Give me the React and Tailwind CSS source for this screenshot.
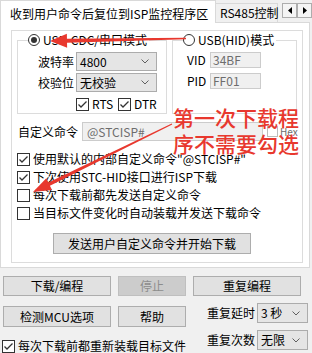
import React from "react";

function Radio({ on }) {
  return (
    <span className="flex items-center justify-center w-[12px] h-[12px] rounded-full border border-[#333333] bg-white">
      {on && <span className="w-[6px] h-[6px] rounded-full bg-[#333333]" />}
    </span>
  );
}

function Box({ on }) {
  return (
    <span className="flex items-center justify-center w-[13px] h-[13px] border border-[#333333] bg-white shrink-0">
      {on && (
        <svg width="11" height="11" viewBox="0 0 11 11">
          <polyline points="1.5,5.5 4,8 9.5,2.5" fill="none" stroke="#333333" strokeWidth="1.3" />
        </svg>
      )}
    </span>
  );
}

function Chevron() {
  return (
    <svg width="8" height="5" viewBox="0 0 8 5" className="shrink-0">
      <polyline points="0.5,0.5 4,4 7.5,0.5" fill="none" stroke="#606060" strokeWidth="1" />
    </svg>
  );
}

function Select({ value, className }) {
  return (
    <div className={`flex items-center justify-between pl-[3px] pr-[7px] bg-[#e5e5e5] border border-[#acacac] ${className}`}>
      <span className="whitespace-nowrap">{value}</span>
      <Chevron />
    </div>
  );
}

function Btn({ children, className = "", disabled }) {
  return (
    <div
      className={`flex items-center justify-center border whitespace-nowrap ${
        disabled ? "bg-[#cccccc] border-[#bfbfbf] text-[#8c8c8c]" : "bg-[#e1e1e1] border-[#adadad]"
      } ${className}`}
    >
      {children}
    </div>
  );
}

function TabArrow({ dir }) {
  return (
    <div className="flex items-center justify-center w-[15px] h-[15px] border border-[#adadad] bg-[#f4f4f4]">
      <svg width="4" height="7" viewBox="0 0 4 7">
        {dir === "l" ? <polygon points="4,0 0,3.5 4,7" fill="#000" /> : <polygon points="0,0 4,3.5 0,7" fill="#000" />}
      </svg>
    </div>
  );
}

// tapered annotation arrow: tip + tail, head size, shaft width at head / at tail
function arrowPoints(tip, tail, headLen, headHalf, w0, w1) {
  const dx = tail[0] - tip[0];
  const dy = tail[1] - tip[1];
  const len = Math.hypot(dx, dy);
  const ux = dx / len;
  const uy = dy / len;
  const px = -uy;
  const py = ux;
  const bx = tip[0] + ux * headLen;
  const by = tip[1] + uy * headLen;
  const pts = [
    [tip[0], tip[1]],
    [bx + px * headHalf, by + py * headHalf],
    [bx + (px * w0) / 2, by + (py * w0) / 2],
    [tail[0] + (px * w1) / 2, tail[1] + (py * w1) / 2],
    [tail[0] - (px * w1) / 2, tail[1] - (py * w1) / 2],
    [bx - (px * w0) / 2, by - (py * w0) / 2],
    [bx - px * headHalf, by - py * headHalf],
  ];
  return pts.map((p) => p.join(",")).join(" ");
}

const RED = "#e8382e";

export default function App() {
  return (
    <div className="relative w-[312px] h-[353px] overflow-hidden bg-[#f0f0f0] text-[12px] leading-[14px] text-black font-['Noto_Sans_CJK_SC',sans-serif]">
      {/* tab strip */}
      <div className="flex items-end h-[22px]">
        <div className="relative z-10 -mb-px h-[23px] w-[216px] bg-white border-l border-t border-r border-[#d9d9d9] pl-[9px] pt-[6px] whitespace-nowrap">
          收到用户命令后复位到ISP监控程序区
        </div>
        <div className="h-[19px] w-[62px] border-t border-r border-[#d9d9d9] bg-[#f0f0f0] pl-[4px] pt-[2px] whitespace-nowrap">
          RS485控制
        </div>
        <div className="ml-auto self-start mt-[3px] flex">
          <TabArrow dir="l" />
          <TabArrow dir="r" />
        </div>
      </div>

      {/* tab page */}
      <div className="w-[310px] h-[246px] border border-[#d9d9d9] bg-white">
        <div className="ml-[10px] mt-[7px] w-[292px] h-[233px] border border-[#dcdcdc]">
          <div className="flex mt-[2px] ml-[5px] gap-[5px]">
            <fieldset className="w-[150px] h-[81px] border border-[#dcdcdc]">
              <legend className="ml-[10px] pr-[2px]">
                <div className="flex items-center h-[14px] gap-[3px] whitespace-nowrap">
                  <Radio on />
                  <span>USB-CDC/串口模式</span>
                </div>
              </legend>
              <div className="flex items-center mt-[5px] pl-[20px] gap-[2px]">
                <span className="w-[36px]">波特率</span>
                <Select value="4800" className="w-[81px] h-[19px]" />
              </div>
              <div className="flex items-center mt-[2px] pl-[20px] gap-[2px]">
                <span className="w-[36px]">校验位</span>
                <Select value="无校验" className="w-[81px] h-[19px]" />
              </div>
              <div className="flex items-center mt-[5px] pl-[58px]">
                <div className="flex items-center gap-[3px] w-[42px]">
                  <Box on />
                  <span>RTS</span>
                </div>
                <div className="flex items-center gap-[3px]">
                  <Box on />
                  <span>DTR</span>
                </div>
              </div>
            </fieldset>

            <fieldset className="w-[125px] h-[81px] border border-[#dcdcdc]">
              <legend className="ml-[10px] pr-[2px]">
                <div className="flex items-center h-[14px] gap-[3px] whitespace-nowrap">
                  <Radio />
                  <span>USB(HID)模式</span>
                </div>
              </legend>
              <div className="flex items-center mt-[5px] pl-[14px]">
                <span className="w-[23px]">VID</span>
                <div className="w-[51px] h-[16px] border border-[#cccccc] bg-[#f0f0f0] pl-[2px] text-[#6d6d6d] leading-[14px]">34BF</div>
              </div>
              <div className="flex items-center mt-[5px] pl-[14px]">
                <span className="w-[23px]">PID</span>
                <div className="w-[51px] h-[16px] border border-[#cccccc] bg-[#f0f0f0] pl-[2px] text-[#6d6d6d] leading-[14px]">FF01</div>
              </div>
            </fieldset>
          </div>

          <div className="flex items-center mt-[8px] pl-[6px] h-[19px]">
            <span className="w-[60px] whitespace-nowrap">自定义命令</span>
            <div className="ml-[4px] w-[181px] h-[19px] flex items-center border border-[#cccccc] bg-[#f0f0f0] pl-[4px] text-[#6d6d6d]">
              @STCISP#
            </div>
            <span className="ml-[4px] w-[11px] h-[11px] border border-[#bcbcbc] bg-white" />
            <span className="ml-[2px] text-[10px] text-[#6d6d6d]">Hex</span>
          </div>

          <div className="mt-[9px] pl-[5px]">
            {[
              [true, '使用默认的内部自定义命令"@STCISP#"'],
              [true, "下次使用STC-HID接口进行ISP下载"],
              [false, "每次下载前都先发送自定义命令"],
              [false, "当目标文件变化时自动装载并发送下载命令"],
            ].map(([on, label]) => (
              <div key={label} className="flex items-center h-[18px] gap-[3px] whitespace-nowrap">
                <Box on={on} />
                <span>{label}</span>
              </div>
            ))}
          </div>

          <Btn className="mt-[11px] ml-[41px] w-[198px] h-[21px]">发送用户自定义命令并开始下载</Btn>
        </div>
      </div>

      {/* bottom controls */}
      <div className="flex mt-[8px] pl-[3px] gap-[7px]">
        <Btn className="w-[108px] h-[20px]">下载/编程</Btn>
        <Btn className="w-[68px] h-[20px]" disabled>停止</Btn>
        <Btn className="w-[108px] h-[20px]">重复编程</Btn>
      </div>
      <div className="flex items-start mt-[7px] pl-[3px] h-[24px]">
        <Btn className="mt-[3px] w-[108px] h-[21px]">检测MCU选项</Btn>
        <Btn className="mt-[3px] ml-[7px] w-[68px] h-[21px]">帮助</Btn>
        <span className="mt-[3px] ml-[21px] w-[48px] whitespace-nowrap">重复延时</span>
        <Select value="3 秒" className="ml-[2px] w-[51px] h-[20px]" />
      </div>
      <div className="flex items-start mt-[3px] pl-[2px]">
        <div className="mt-[9px] w-[205px] h-[14px] flex items-center gap-[3px] whitespace-nowrap">
          <Box on />
          <span>每次下载前都重新装载目标文件</span>
        </div>
        <span className="mt-[3px] w-[48px] whitespace-nowrap">重复次数</span>
        <Select value="无限" className="ml-[2px] w-[51px] h-[20px]" />
      </div>

      {/* red annotation */}
      <div className="absolute left-[173px] top-[104px] text-[21px] leading-[26px] font-medium text-[#e8382e] whitespace-nowrap">
        第一次下载程
        <br />
        序不需要勾选
      </div>
      <svg className="absolute inset-0 pointer-events-none" width="312" height="353">
        <polygon points={arrowPoints([50, 41], [186, 38.5], 17, 7, 4, 1.5)} fill={RED} />
        <polygon points={arrowPoints([33, 192], [172, 124], 18, 6.5, 3.5, 1)} fill={RED} />
      </svg>
    </div>
  );
}
